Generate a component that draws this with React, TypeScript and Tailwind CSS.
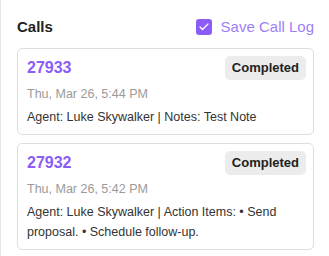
import { Check } from 'lucide-react'

const calls = [
    {
        id: '27933',
        status: 'Completed',
        date: 'Thu, Mar 26, 5:44 PM',
        summary: 'Agent: Luke Skywalker | Notes: Test Note',
    },
    {
        id: '27932',
        status: 'Completed',
        date: 'Thu, Mar 26, 5:42 PM',
        summary:
            'Agent: Luke Skywalker | Action Items: • Send proposal. • Schedule follow-up.',
    },
]

function CallCard({ call }: { call: any }) {
    return (
        <div className="border border-[#dedede] rounded-[5px] bg-white pl-[9px] pr-[7px] pt-[7px] pb-[7px]">
            <div className="flex flex-row items-center justify-between h-6">
                <span className="text-[16px] font-bold text-[#8b5cf6] leading-6">
                    {call.id}
                </span>
                <span className="bg-[#ececec] rounded-[5px] px-[7px] h-6 flex items-center text-[13px] font-bold text-[#222]">
                    {call.status}
                </span>
            </div>
            <div className="mt-1 text-[12.5px] leading-5 text-[#9a9a9a]">
                {call.date}
            </div>
            <div className="mt-[3px] text-[12.5px] leading-5 text-[#333] pr-2">
                {call.summary}
            </div>
        </div>
    )
}

function App() {
    return (
        <div
            className="w-[329px] h-[256px] bg-white border-l border-[#e6e6e6] overflow-hidden"
            style={{ fontFamily: '"Liberation Sans", Arial, sans-serif' }}
        >
            <div className="pl-4 pr-[15px] pt-[17px]">
                <div className="flex flex-row items-center justify-between h-5 mb-[11px]">
                    <h2 className="text-[15px] font-bold text-[#222]">Calls</h2>
                    <label className="flex flex-row items-center gap-[9px]">
                        <span className="w-4 h-4 rounded-[3px] bg-[#8b5cf6] flex items-center justify-center">
                            <Check size={12} strokeWidth={2.5} className="text-white" />
                        </span>
                        <span className="text-[15px] text-[#9d7ff6]">Save Call Log</span>
                    </label>
                </div>
                <div className="flex flex-col gap-2">
                    {calls.map((call) => (
                        <CallCard key={call.id} call={call} />
                    ))}
                </div>
            </div>
        </div>
    )
}

export default App
